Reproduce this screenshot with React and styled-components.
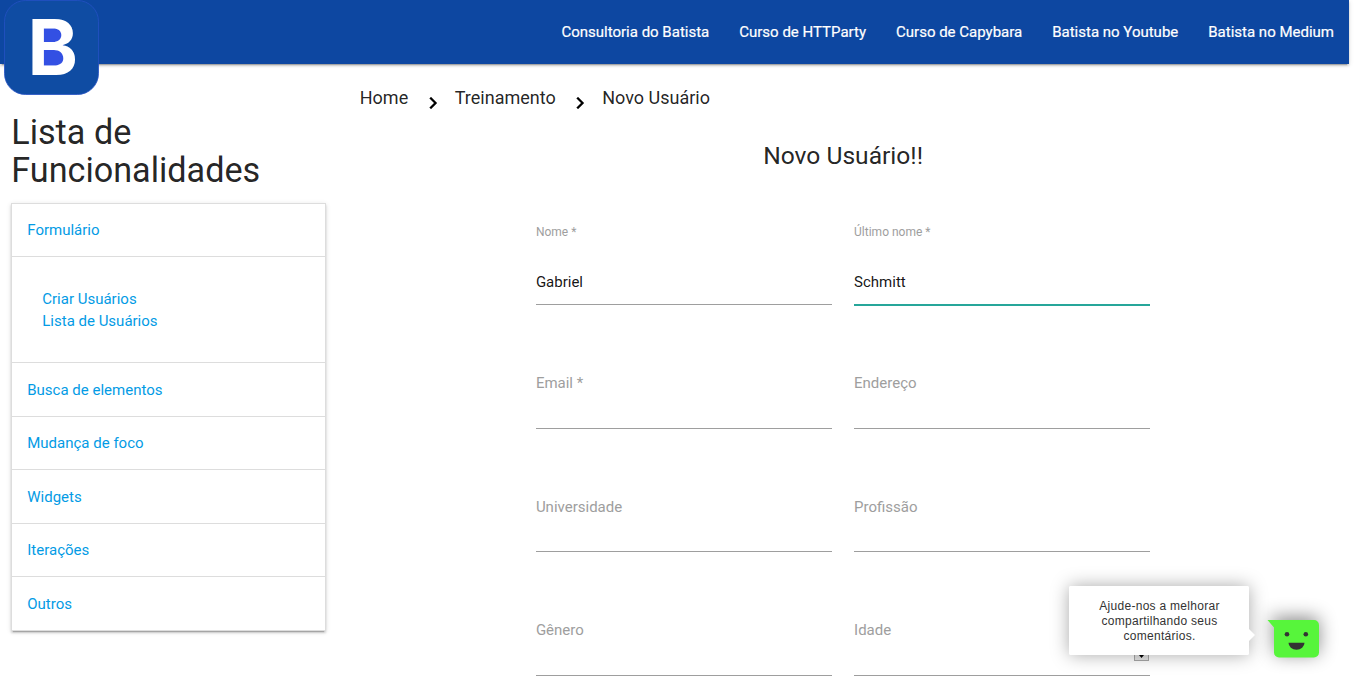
import React from 'react';
import styled, { createGlobalStyle, css } from 'styled-components';

const GlobalStyle = createGlobalStyle`
  *, *::before, *::after { box-sizing: border-box; }
  html { font-size: 15px; line-height: 1.5; overflow: hidden; }
  body {
    margin: 0;
    height: 686px;
    overflow: hidden;
    background: #fff;
    color: rgba(0, 0, 0, 0.87);
    font-family: Roboto, sans-serif;
  }
  h4, h5 { font-weight: 400; line-height: 110%; margin: 0; }
  a { text-decoration: none; }
`;

const Page = styled.div`
  width: 1349px;
  height: 686px;
`;

const NavBar = styled.nav`
  position: relative;
  display: flex;
  justify-content: flex-end;
  height: 64px;
  background: #0d47a1;
  box-shadow: 0 2px 2px 0 rgba(0, 0, 0, 0.14), 0 1px 5px 0 rgba(0, 0, 0, 0.12),
    0 3px 1px -2px rgba(0, 0, 0, 0.2);
`;

const NavLink = styled.a`
  padding: 0 15px;
  font-size: 15px;
  line-height: 64px;
  color: #fff;
  -webkit-text-stroke: 0.2px #fff;
`;

const Logo = styled.svg`
  position: absolute;
  left: 4px;
  top: 0;
`;

const Columns = styled.div`
  display: flex;
`;

const Sidebar = styled.aside`
  width: 337.25px;
  padding: 49.4px 11.25px 0;
`;

const SideTitle = styled.h4`
  font-size: 34.2px;
  line-height: 38px;
  margin-bottom: 13.35px;
`;

const Menu = styled.ul`
  list-style: none;
  margin: 0;
  padding: 0;
  border: 1px solid #ddd;
  border-bottom: 0;
  box-shadow: 0 2px 2px 0 rgba(0, 0, 0, 0.14), 0 1px 5px 0 rgba(0, 0, 0, 0.12),
    0 3px 1px -2px rgba(0, 0, 0, 0.2);
`;

const MenuHeader = styled.div`
  padding: 15.5px 15px 14.5px;
  line-height: 22.5px;
  border-bottom: 1px solid #ddd;
`;

const MenuBody = styled.div`
  display: flex;
  flex-direction: column;
  padding: 30.3px 30px 29.7px;
  line-height: 22.5px;
  border-bottom: 1px solid #ddd;
`;

const MenuLink = styled.a`
  color: #039be5;
`;

const Main = styled.main`
  flex: 1;
  padding: 0 11.25px;
`;

const Breadcrumbs = styled.div`
  display: flex;
  align-items: center;
  height: 67px;
  padding-left: 11.25px;
  font-size: 18px;
`;

const Chevron = styled.svg`
  width: 24px;
  height: 24px;
  margin: 10px 10.2px 0 12.4px;
`;

const FormTitle = styled.h5`
  font-size: 24.6px;
  margin-top: 11px;
  height: 39.7px;
  text-align: center;
`;

const Form = styled.form`
  width: 637px;
  margin: 0 auto;
  display: grid;
  grid-template-columns: 318.2px 318.2px;
  grid-auto-rows: 123.5px;
`;

const Field = styled.div`
  display: flex;
  flex-direction: column;
  justify-content: flex-end;
  padding: 0 11.25px;
`;

const FieldLabel = styled.span`
  color: #9e9e9e;
  font-size: ${(p) => (p.$raised ? 12 : 15)}px;
  line-height: ${(p) => (p.$raised ? 18 : 22.5)}px;
  margin-bottom: ${(p) => (p.$raised ? 18 : 0)}px;
`;

const FieldValue = styled.div`
  height: ${(p) => (p.$filled ? 46 : 34.1)}px;
  line-height: 46px;
  border-bottom: 1px solid #9e9e9e;
  color: rgba(0, 0, 0, 0.92);
  ${(p) =>
    p.$focused &&
    css`
      border-color: #26a69a;
      box-shadow: 0 1px 0 0 #26a69a;
    `}
`;

const Spinner = styled.svg`
  display: block;
  margin: 8.7px 0.8px 0 auto;
`;

const FeedbackBubble = styled.div`
  position: absolute;
  left: 1069px;
  top: 586px;
  width: 180px;
  height: 69px;
  padding: 13px 0 0 1px;
  border-radius: 2px;
  background: rgba(255, 255, 255, 0.96);
  box-shadow: 0 0 18px rgba(0, 0, 0, 0.34);
  color: #333;
  font: 12px/15px 'Liberation Sans', Arial, sans-serif;
  letter-spacing: 0.28px;
  text-align: center;

  &::after {
    content: '';
    position: absolute;
    left: 100%;
    top: 43px;
    border: 6px solid transparent;
    border-left-color: #fff;
    border-right: 0;
  }
`;

const Smiley = styled.svg`
  position: absolute;
  left: 1250px;
  top: 596px;
  overflow: visible;
`;

const SmileyShape = styled.g`
  filter: drop-shadow(0 -3px 9px rgba(0, 0, 0, 0.45));
`;

const navLinks = [
  'Consultoria do Batista',
  'Curso de HTTParty',
  'Curso de Capybara',
  'Batista no Youtube',
  'Batista no Medium',
];

const menu = [
  { title: 'Formulário', items: ['Criar Usuários', 'Lista de Usuários'] },
  { title: 'Busca de elementos' },
  { title: 'Mudança de foco' },
  { title: 'Widgets' },
  { title: 'Iterações' },
  { title: 'Outros' },
];

const fields = [
  { label: 'Nome *', value: 'Gabriel' },
  { label: 'Último nome *', value: 'Schmitt', focused: true },
  { label: 'Email *' },
  { label: 'Endereço' },
  { label: 'Universidade' },
  { label: 'Profissão' },
  { label: 'Gênero' },
  { label: 'Idade', number: true },
];

function BrandLogo() {
  return (
    <Logo width="96" height="96" viewBox="0 0 96 96">
      <rect x="0.5" y="0.5" width="94" height="94" rx="21" fill="#0f4ca3" stroke="#2450c4" strokeWidth="0.8" />
      <rect x="36" y="26" width="24" height="42" fill="#3350e3" />
      <text
        x="23.6"
        y="75.2"
        fill="#fff"
        fontFamily="Inter, sans-serif"
        fontWeight="700"
        fontSize="77.5"
        textLength="50.5"
        lengthAdjust="spacingAndGlyphs"
      >
        B
      </text>
    </Logo>
  );
}

function ChevronRight() {
  return (
    <Chevron viewBox="0 0 24 24">
      <path d="M10 6L8.59 7.41 13.17 12l-4.58 4.59L10 18l6-6z" fill="#000" stroke="#000" strokeWidth="0.3" />
    </Chevron>
  );
}

export default function App() {
  return (
    <>
      <GlobalStyle />
      <Page>
        <NavBar>
          <BrandLogo />
          {navLinks.map((t) => (
            <NavLink key={t}>{t}</NavLink>
          ))}
        </NavBar>
        <Columns>
          <Sidebar>
            <SideTitle>Lista de Funcionalidades</SideTitle>
            <Menu>
              {menu.map((m) => (
                <li key={m.title}>
                  <MenuHeader>
                    <MenuLink>{m.title}</MenuLink>
                  </MenuHeader>
                  {m.items && (
                    <MenuBody>
                      {m.items.map((i) => (
                        <MenuLink key={i}>{i}</MenuLink>
                      ))}
                    </MenuBody>
                  )}
                </li>
              ))}
            </Menu>
          </Sidebar>
          <Main>
            <Breadcrumbs>
              <span>Home</span>
              <ChevronRight />
              <span>Treinamento</span>
              <ChevronRight />
              <span>Novo Usuário</span>
            </Breadcrumbs>
            <FormTitle>Novo Usuário!!</FormTitle>
            <Form>
              {fields.map((f) => (
                <Field key={f.label}>
                  <FieldLabel $raised={!!f.value}>{f.label}</FieldLabel>
                  <FieldValue $filled={!!f.value} $focused={f.focused}>
                    {f.value}
                    {f.number && (
                      <Spinner width="15" height="11" viewBox="0 0 15 11">
                        <rect x="0.5" y="-3.5" width="14" height="14" fill="#e6e6e6" stroke="#a8a8a8" />
                        <path d="M5 5h5L7.500 8z" fill="#000" />
                      </Spinner>
                    )}
                  </FieldValue>
                </Field>
              ))}
            </Form>
          </Main>
        </Columns>
        <FeedbackBubble>
          Ajude-nos a melhorar
          <br />
          compartilhando seus
          <br />
          comentários.
        </FeedbackBubble>
        <Smiley width="90" height="80" viewBox="0 0 90 80">
          <SmileyShape>
            <path d="M17.500 24H64a5 5 0 0 1 5 5V56.500a5 5 0 0 1-5 5H29a5 5 0 0 1-5-5V31.500z" fill="#57f53b" />
          </SmileyShape>
          <circle cx="37" cy="38.300" r="2.300" fill="#333" />
          <circle cx="55.800" cy="38.300" r="2.300" fill="#333" />
          <path d="M38.500 46.700h16a8 7 0 0 1-16 0z" fill="#333" />
        </Smiley>
      </Page>
    </>
  );
}
